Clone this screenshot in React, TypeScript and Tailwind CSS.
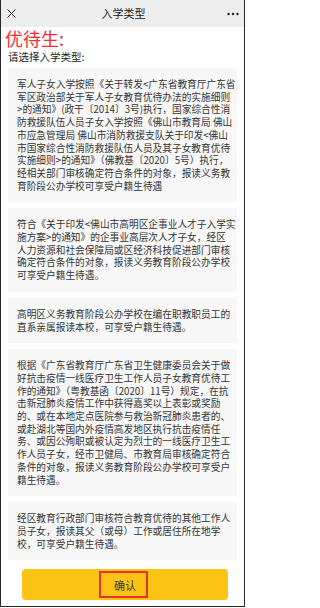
import React from 'react';

// Types of preferential admission, one entry per card, split into the
// exact lines shown on the screen.
const options: string[][] = [
  [
    '军人子女入学按照《关于转发<广东省教育厅广东省',
    '军区政治部关于军人子女教育优待办法的实施细则',
    '>的通知》(政干〔2014〕3号)执行，国家综合性消',
    '防救援队伍人员子女入学按照《佛山市教育局 佛山',
    '市应急管理局 佛山市消防救援支队关于印发<佛山',
    '市国家综合性消防救援队伍人员及其子女教育优待',
    '实施细则>的通知》（佛教基〔2020〕5号）执行，',
    '经相关部门审核确定符合条件的对象，报读义务教',
    '育阶段公办学校可享受户籍生待遇',
  ],
  [
    '符合《关于印发<佛山市高明区企事业人才子入学实',
    '施方案>的通知》的企事业高层次人才子女，经区',
    '人力资源和社会保障局或区经济科技促进部门审核',
    '确定符合条件的对象，报读义务教育阶段公办学校',
    '可享受户籍生待遇。',
  ],
  [
    '高明区义务教育阶段公办学校在编在职教职员工的',
    '直系亲属报读本校，可享受户籍生待遇。',
  ],
  [
    '根据《广东省教育厅广东省卫生健康委员会关于做',
    '好抗击疫情一线医疗卫生工作人员子女教育优待工',
    '作的通知》（粤教基函〔2020〕11号）规定，在抗',
    '击新冠肺炎疫情工作中获得嘉奖以上表彰或奖励',
    '的、或在本地定点医院参与救治新冠肺炎患者的、',
    '或赴湖北等国内外疫情高发地区执行抗击疫情任',
    '务、或因公殉职或被认定为烈士的一线医疗卫生工',
    '作人员子女，经市卫健局、市教育局审核确定符合',
    '条件的对象，报读义务教育阶段公办学校可享受户',
    '籍生待遇。',
  ],
  [
    '经区教育行政部门审核符合教育优待的其他工作人',
    '员子女，报读其父（或母）工作或居住所在地学',
    '校，可享受户籍生待遇。',
  ],
];

const font = { fontFamily: '"Noto Sans CJK SC", "Noto Sans", sans-serif' };

export default function App() {
  return (
    <div
      className="w-[245px] h-[607px] bg-white border border-t-0 border-[#2a2a2a] flex flex-col overflow-hidden"
      style={font}
    >
      {/* Header */}
      <div className="h-[27px] shrink-0 bg-[#ededed] flex items-center justify-between pl-[6px] pr-[5px]">
        <svg width="9" height="9" viewBox="0 0 9 9" className="text-[#222]">
          <path d="M0.5 0.5 L8.5 8.5 M8.5 0.5 L0.5 8.5" stroke="currentColor" strokeWidth="1" />
        </svg>
        <span className="text-[11px] leading-none text-[#1a1a1a] ml-[4px]">入学类型</span>
        <svg width="12" height="4" viewBox="0 0 12 4" className="text-[#222]">
          <circle cx="1.5" cy="2" r="1.2" fill="currentColor" />
          <circle cx="6" cy="2" r="1.2" fill="currentColor" />
          <circle cx="10.5" cy="2" r="1.2" fill="currentColor" />
        </svg>
      </div>

      {/* Title */}
      <div className="pl-[4px] pt-[1px] text-[18px] leading-[20px] text-[#ef3038]">优待生:</div>
      <div className="pl-[7px] mt-[2px] text-[10.5px] leading-[14px] text-[#222]">请选择入学类型:</div>

      {/* Option cards */}
      <div className="mt-[4px] px-[7px] flex flex-col gap-[6px]">
        {options.map((lines, i) => (
          <div key={i} className="bg-[#f7f7f7] px-[9px] py-[10px] text-[9.7px] leading-[12.7px] text-[#353535]">
            {lines.map((line, j) => (
              <div key={j} className="whitespace-nowrap">
                {line}
              </div>
            ))}
          </div>
        ))}
      </div>

      {/* Confirm */}
      <div className="mt-[9px] pl-[21px]">
        <button className="relative w-[206px] h-[31px] rounded-[4px] bg-[#fcc214] flex items-center justify-center text-[11px] text-[#3a3a3a]">
          确认
          <span className="absolute left-[77px] top-[2px] w-[49px] h-[27px] border-2 border-[#e8332b]" />
        </button>
      </div>
    </div>
  );
}
